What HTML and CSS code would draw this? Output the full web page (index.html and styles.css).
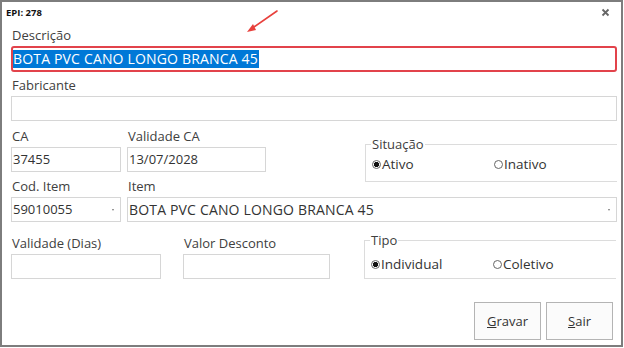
FILE: index.html
```html
<!DOCTYPE html>
<html lang="pt-BR">
<head>
    <meta charset="UTF-8">
    <title>EPI: 278</title>
    <link rel="stylesheet" href="styles.css">
</head>
<body>
    <div class="window">
        <div class="titlebar">
            <span class="title">EPI: 278</span>
            <svg class="close" width="9" height="9" viewBox="0 0 9 9">
                <path d="M1.5 1.5 L7.5 7.5 M7.5 1.5 L1.5 7.5" stroke="#666" stroke-width="1.8"/>
            </svg>
        </div>

        <!-- red annotation arrow pointing at the Descrição field -->
        <svg class="pointer" width="36" height="26" viewBox="0 0 36 26">
            <path d="M33 2 L7 20" stroke="#e8403c" stroke-width="1.6" stroke-linecap="round"/>
            <path d="M3 23 L9 15 L12 21 Z" fill="#e8403c"/>
        </svg>

        <div class="form">
            <div class="field">
                <label>Descrição</label>
                <div class="input focused caps"><span class="selected">BOTA PVC CANO LONGO BRANCA 45</span></div>
            </div>

            <div class="field gap-4">
                <label>Fabricante</label>
                <div class="input"></div>
            </div>

            <div class="row gap-6">
                <div class="field w-ca">
                    <label>CA</label>
                    <div class="input">37455</div>
                </div>
                <div class="field w-validade">
                    <label>Validade CA</label>
                    <div class="input">13/07/2028</div>
                </div>
                <fieldset class="group group-situacao">
                    <legend>Situação</legend>
                    <div class="radios">
                        <span class="radio checked">Ativo</span>
                        <span class="radio">Inativo</span>
                    </div>
                </fieldset>
            </div>

            <div class="row gap-5">
                <div class="field w-ca">
                    <label>Cod. Item</label>
                    <div class="input combo">59010055<i class="caret"></i></div>
                </div>
                <div class="field grow">
                    <label>Item</label>
                    <div class="input combo caps">BOTA PVC CANO LONGO BRANCA 45<i class="caret"></i></div>
                </div>
            </div>

            <div class="row gap-12">
                <div class="field w-dias">
                    <label>Validade (Dias)</label>
                    <div class="input"></div>
                </div>
                <div class="field w-desconto">
                    <label>Valor Desconto</label>
                    <div class="input"></div>
                </div>
                <fieldset class="group group-tipo">
                    <legend>Tipo</legend>
                    <div class="radios">
                        <span class="radio checked">Individual</span>
                        <span class="radio">Coletivo</span>
                    </div>
                </fieldset>
            </div>

            <div class="actions">
                <button class="btn"><u>G</u>ravar</button>
                <button class="btn"><u>S</u>air</button>
            </div>
        </div>
    </div>
</body>
</html>
```

FILE: styles.css
```css
body {
    margin: 0;
    background: white;
    font-family: 'Open Sans', 'Noto Sans', sans-serif;
    font-size: 13px;
    color: #3a3a3a;
}

.window {
    position: relative;
    width: 623px;
    height: 347px;
    box-sizing: border-box;
    border: 2px solid #7d7d7d;
    background: white;
}

.titlebar {
    height: 24px;
    display: flex;
    align-items: center;
    justify-content: space-between;
    padding: 0 11px 0 4px;
}

.title {
    font-size: 9.5px;
    font-weight: bold;
    color: #111;
    margin-top: -4px;
}

.close {
    margin-top: -4px;
}

.pointer {
    position: absolute;
    left: 242px;
    top: 7px;
}

.form {
    padding: 0 4px 0 9px;
}

.field {
    display: flex;
    flex-direction: column;
}

.field label {
    height: 20px;
    line-height: 19px;
    padding-left: 1px;
    color: #404040;
}

.input {
    position: relative;
    height: 25px;
    box-sizing: border-box;
    border: 1px solid #d6d6d6;
    line-height: 23px;
    padding-left: 1px;
    color: #333;
    white-space: nowrap;
    overflow: hidden;
}

.input.caps {
    font-size: 14px;
    letter-spacing: 0.17px;
}

.input.focused {
    height: 26px;
    border: 2px solid #e2434b;
    border-radius: 3px;
    padding-left: 0;
    line-height: 18px;
    padding-top: 2px;
}

.selected {
    display: inline-block;
    background: #0078d7;
    color: white;
    height: 18px;
    padding-right: 1px;
}

.combo .caret {
    position: absolute;
    right: 6px;
    top: 11px;
    width: 0;
    height: 0;
    border-left: 1.5px solid transparent;
    border-right: 1.5px solid transparent;
    border-top: 2px solid #777;
}

.row {
    display: flex;
    align-items: flex-start;
    gap: 6px;
}

.gap-4 { margin-top: 4px; }
.gap-5 { margin-top: 5px; }
.gap-6 { margin-top: 6px; }
.gap-12 { margin-top: 12px; }

.w-ca { width: 110px; }
.w-validade { width: 139px; }
.w-dias { width: 150px; }
.w-desconto { width: 147px; margin-left: 16px; }
.grow { flex: 1; }

.group {
    margin: 0;
    padding: 0 0 0 6px;
    border: 1px solid #dcdcdc;
    border-right: none;
    min-width: 0;
    box-sizing: border-box;
    width: 252px;
}

.group legend {
    padding: 0 1px;
    margin-left: -1px;
    line-height: 16px;
    color: #404040;
}

.group-situacao {
    margin-left: 93px;
    margin-top: 9px;
    margin-bottom: -20px;
    padding-bottom: 7px;
}

.group-situacao .radios {
    padding-top: 2px;
}

.group-tipo {
    margin-left: 28px;
    margin-top: -2px;
    margin-bottom: -20px;
    padding-bottom: 4px;
}

.group-tipo .radios {
    padding-top: 6px;
}

.radios {
    display: grid;
    grid-template-columns: 122px 1fr;
    line-height: 20px;
    font-size: 13.5px;
}

.radio {
    display: flex;
    align-items: center;
    color: #333;
}

.radio::before {
    content: '';
    width: 7px;
    height: 7px;
    border: 1px solid #666;
    border-radius: 50%;
    margin-right: 1px;
    box-sizing: content-box;
}

.radio.checked::before {
    background: radial-gradient(circle, #111 0 2.4px, white 2.9px);
}

.actions {
    display: flex;
    justify-content: flex-end;
    gap: 5px;
    margin-top: 23px;
    padding-right: 4px;
}

.btn {
    width: 67px;
    height: 38px;
    background: #fbfbfb;
    border: 1px solid #b4b4b4;
    font-family: inherit;
    font-size: 13px;
    color: #333;
    padding: 0;
}
```
